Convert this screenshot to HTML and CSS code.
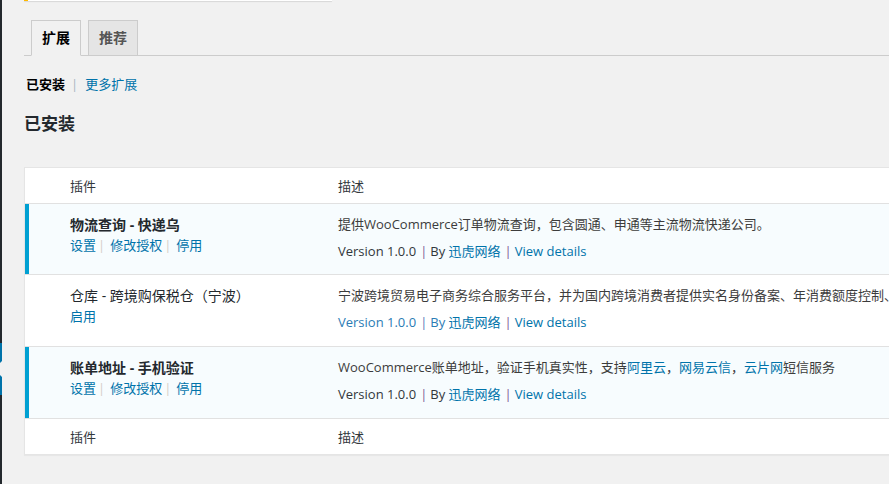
FILE: index.html
```html
<!DOCTYPE html>
<html lang="zh-CN">
<head>
<meta charset="utf-8">
<title>扩展</title>
<link rel="stylesheet" href="styles.css">
</head>
<body>
<div class="admin">
  <div class="menu-edge">
    <div class="menu-current"><span class="menu-arrow"></span></div>
  </div>
  <main class="wrap">
    <div class="notice"></div>
    <nav class="tabs">
      <a class="tab tab-active">扩展</a>
      <a class="tab">推荐</a>
    </nav>
    <div class="subnav">
      <span class="subnav-current">已安装</span><span class="subnav-sep">|</span><a class="link">更多扩展</a>
    </div>
    <h2 class="page-title">已安装</h2>

    <div class="plugins">
      <div class="prow prow-head">
        <div class="cell-check"></div>
        <div class="cell-name">插件</div>
        <div class="cell-desc">描述</div>
      </div>

      <div class="prow prow-body is-active">
        <div class="cell-check"></div>
        <div class="cell-name">
          <div class="plugin-name">物流查询 - 快递乌</div>
          <div class="row-actions"><a class="link">设置</a><span class="act-sep">|</span><a class="link">修改授权</a><span class="act-sep">|</span><a class="link">停用</a></div>
        </div>
        <div class="cell-desc">
          <p class="desc-text">提供WooCommerce订单物流查询，包含圆通、申通等主流物流快递公司。</p>
          <div class="version">Version 1.0.0<span class="ver-sep">|</span>By <a class="link">迅虎网络</a><span class="ver-sep">|</span><a class="link">View details</a></div>
        </div>
      </div>

      <div class="prow prow-body">
        <div class="cell-check"></div>
        <div class="cell-name">
          <div class="plugin-name plugin-name-inactive">仓库 - 跨境购保税仓（宁波）</div>
          <div class="row-actions"><a class="link">启用</a></div>
        </div>
        <div class="cell-desc">
          <p class="desc-text">宁波跨境贸易电子商务综合服务平台，并为国内跨境消费者提供实名身份备案、年消费额度控制、</p>
          <div class="version version-inactive">Version 1.0.0<span class="ver-sep ver-sep-blue">|</span>By <a class="link">迅虎网络</a><span class="ver-sep">|</span><a class="link">View details</a></div>
        </div>
      </div>

      <div class="prow prow-body is-active">
        <div class="cell-check"></div>
        <div class="cell-name">
          <div class="plugin-name">账单地址 - 手机验证</div>
          <div class="row-actions"><a class="link">设置</a><span class="act-sep">|</span><a class="link">修改授权</a><span class="act-sep">|</span><a class="link">停用</a></div>
        </div>
        <div class="cell-desc">
          <p class="desc-text">WooCommerce账单地址，验证手机真实性，支持<a class="link">阿里云</a>，<a class="link">网易云信</a>，<a class="link">云片网</a>短信服务</p>
          <div class="version">Version 1.0.0<span class="ver-sep">|</span>By <a class="link">迅虎网络</a><span class="ver-sep">|</span><a class="link">View details</a></div>
        </div>
      </div>

      <div class="prow prow-foot">
        <div class="cell-check"></div>
        <div class="cell-name">插件</div>
        <div class="cell-desc">描述</div>
      </div>
    </div>
  </main>
</div>
</body>
</html>
```

FILE: styles.css
```css
html, body {
  margin: 0;
  padding: 0;
  height: 100%;
  overflow: hidden;
}

body {
  background: #f1f1f1;
  color: #444;
  font-family: "Open Sans", "Noto Sans CJK SC", sans-serif;
  font-size: 13px;
  line-height: 20px;
}

.admin {
  display: flex;
  height: 100%;
}

.menu-edge {
  flex: none;
  width: 2px;
  background: #23282d;
  padding-top: 343px;
  overflow: hidden;
}

.menu-current {
  position: relative;
  height: 52px;
  background: #0073aa;
}

.menu-arrow {
  position: absolute;
  right: 0;
  top: 50%;
  margin-top: -8px;
  border: 8px solid transparent;
  border-right-color: #f1f1f1;
}

.wrap {
  flex: 1;
  min-width: 0;
  padding-left: 22px;
}

.notice {
  width: 304px;
  height: 1px;
  background: #fff;
  border-left: 4px solid #ffb900;
  box-shadow: 0 1px 1px rgba(0, 0, 0, 0.12);
}

.tabs {
  display: flex;
  margin-top: 19px;
  border-bottom: 1px solid #ccc;
}

.tab {
  margin-left: 7px;
  margin-bottom: -1px;
  padding: 5px 10px;
  border: 1px solid #ccc;
  background: #e5e5e5;
  color: #555;
  font-size: 14px;
  line-height: 24px;
  font-weight: 700;
}

.tab-active {
  background: #f1f1f1;
  border-bottom-color: #f1f1f1;
  color: #000;
}

.subnav {
  margin-top: 18px;
  padding-left: 2px;
  line-height: 20px;
  color: #666;
}

.subnav-current {
  color: #000;
  font-weight: 700;
}

.subnav-sep {
  margin: 0 7px 0 6px;
  color: #a8b4c0;
}

.link {
  color: #0073aa;
  text-decoration: none;
}

.page-title {
  margin: 18px 0 0;
  font-size: 17px;
  line-height: 24px;
  font-weight: 700;
  color: #23282d;
}

.plugins {
  margin-top: 31px;
  width: 1200px;
  background: #fff;
  border: 1px solid #e5e5e5;
  box-shadow: 0 1px 1px rgba(0, 0, 0, 0.04);
}

.prow {
  display: grid;
  grid-template-columns: 35px 268px 1fr;
}

.cell-name,
.cell-desc {
  padding-left: 10px;
  white-space: nowrap;
}

.prow-head,
.prow-foot {
  color: #32373c;
}

.prow-head > div,
.prow-foot > div {
  padding-top: 8px;
  padding-bottom: 7px;
}

.prow-head {
  border-bottom: 1px solid #e1e1e1;
}

.prow-body {
  box-sizing: border-box;
  height: 72px;
  border-bottom: 1px solid #e1e1e1;
}

.prow-body:nth-child(2) {
  height: 71px;
}

.prow-body .cell-name,
.prow-body .cell-desc {
  padding-top: 10px;
}

.is-active {
  background: #f7fcfe;
}

.is-active .cell-check {
  border-left: 4px solid #00a0d2;
}

.plugin-name {
  font-size: 14px;
  font-weight: 700;
  color: #23282d;
  line-height: 21px;
}

.plugin-name-inactive {
  font-weight: 400;
}

.row-actions {
  line-height: 21px;
}

.act-sep {
  margin: 0 5px 0 2px;
  color: #d4cfc8;
}

.desc-text {
  margin: 0;
  font-size: 13px;
  line-height: 20px;
  color: #3c3c3c;
}

.version {
  margin-top: 7px;
  font-size: 13px;
  line-height: 21px;
  color: #32373c;
}

.version-inactive {
  color: #2b7cb5;
}

.ver-sep {
  margin: 0 3px 0 4px;
  color: #7e5a96;
}

.ver-sep-blue {
  color: #5a78b8;
}
```
